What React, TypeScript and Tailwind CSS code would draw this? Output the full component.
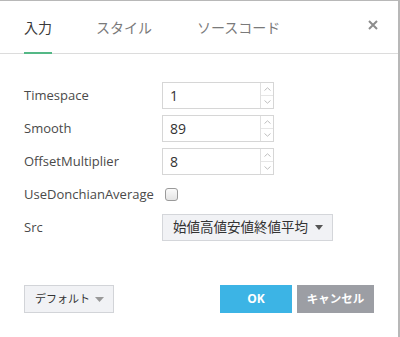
import React from "react";

const jp = { fontFamily: '"Open Sans", "Noto Sans CJK JP", sans-serif' };

function NumInput({ value }: { value: string }) {
  return (
    <div className="flex h-[27px] w-[112px] border border-[#d6d6d6] bg-white">
      <div className="flex flex-1 items-center pl-[7px] text-[14px] text-[#333]">{value}</div>
      <div className="flex w-[13px] flex-col border-l border-[#e0e0e0]">
        <div className="flex flex-1 items-center justify-center border-b border-[#e6e6e6]">
          <svg width="7" height="4" viewBox="0 0 7 4"><path d="M0.5 3.5L3.5 0.8L6.5 3.5" fill="none" stroke="#b8b8b8" strokeWidth="0.9" /></svg>
        </div>
        <div className="flex flex-1 items-center justify-center">
          <svg width="7" height="4" viewBox="0 0 7 4"><path d="M0.5 0.5L3.5 3.2L6.5 0.5" fill="none" stroke="#b8b8b8" strokeWidth="0.9" /></svg>
        </div>
      </div>
    </div>
  );
}

function Row({ label, children }: { label: string; children: React.ReactNode }) {
  return (
    <div className="flex h-[27px] items-center">
      <div className="w-[138px] whitespace-nowrap text-[13px] text-[#4a4a4a]">{label}</div>
      {children}
    </div>
  );
}

export default function App() {
  return (
    <div className="flex h-[337px] w-[400px] flex-col border-t border-r-2 border-[#b8b8b8] bg-white" style={jp}>
      <div className="relative flex h-[53px] border-b border-[#dcdcdc] pl-6">
        <div className="relative flex items-center text-[14px] text-[#3a3a3a]">
          入力
          <div className="absolute bottom-[-1px] left-0 right-0 h-[2px] bg-[#54b886]" />
        </div>
        <div className="ml-[44px] flex items-center text-[14px] text-[#7a7a7a]">スタイル</div>
        <div className="ml-[45px] flex items-center text-[14px] text-[#7a7a7a]">ソースコード</div>
        <div className="absolute right-[20px] top-[19px]">
          <svg width="10" height="10" viewBox="0 0 10 10">
            <path d="M1 1L9 9M9 1L1 9" stroke="#8c8c8c" strokeWidth="2" />
          </svg>
        </div>
      </div>

      <div className="flex flex-col gap-[6px] pl-6 pt-[28px]">
        <Row label="Timespace"><NumInput value="1" /></Row>
        <Row label="Smooth"><NumInput value="89" /></Row>
        <Row label="OffsetMultiplier"><NumInput value="8" /></Row>
        <Row label="UseDonchianAverage">
          <div className="ml-[3px] h-[13px] w-[13px] rounded-[3px] border border-[#9a9a9a] bg-gradient-to-b from-[#fafafa] to-[#e4e4e4]" />
        </Row>
        <Row label="Src">
          <div className="flex h-[27px] w-[171px] items-center justify-between whitespace-nowrap border border-[#d4d6da] bg-[#f1f2f5] pl-[10px] pr-[9px] text-[13.5px] text-[#333]">
            <span>始値高値安値終値平均</span>
            <svg width="8" height="5" viewBox="0 0 8 5"><path d="M0 0H8L4 5Z" fill="#555" /></svg>
          </div>
        </Row>
      </div>

      <div className="mt-auto mb-[24px] flex items-center pl-6 pr-[24px]">
        <div className="flex h-[28px] w-[90px] items-center justify-between whitespace-nowrap border border-[#d2d4d8] bg-[#f1f2f5] pl-[10px] pr-[9px] text-[11px] text-[#333]">
          <span>デフォルト</span>
          <svg width="9" height="5" viewBox="0 0 9 5"><path d="M0 0H9L4.5 5Z" fill="#999" /></svg>
        </div>
        <div className="ml-auto flex h-[28px] w-[72px] items-center justify-center bg-[#3cb4e5] text-[12px] font-bold text-white">OK</div>
        <div className="ml-[5px] flex h-[28px] w-[77px] items-center justify-center whitespace-nowrap bg-[#9c9ea4] text-[11.5px] font-bold text-white">キャンセル</div>
      </div>
    </div>
  );
}
